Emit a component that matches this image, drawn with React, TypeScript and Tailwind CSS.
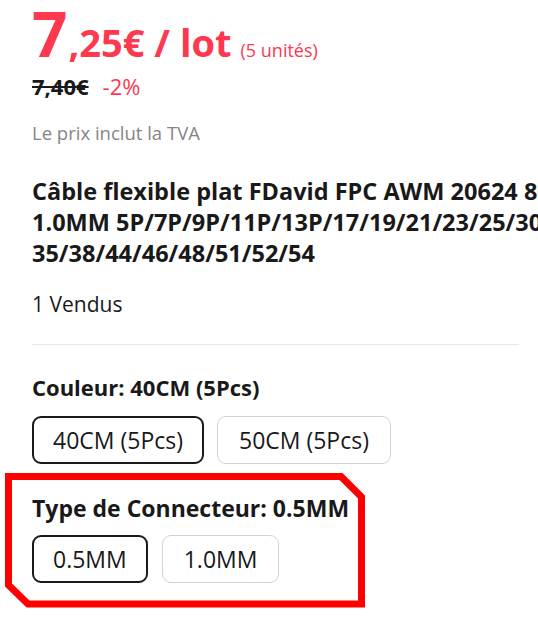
import React from 'react';

const SkuButton: React.FC<{ label: string; selected?: boolean }> = ({ label, selected }) => (
  <div
    className={`h-[48px] flex items-center justify-center rounded-[9px] text-[23px] text-[#191919] ${
      selected ? 'border-2 border-[#191919] px-[19px]' : 'border border-[#d3d3d3] px-[21px]'
    }`}
  >
    {label}
  </div>
);

export default function App() {
  return (
    <div className="relative w-[538px] h-[629px] bg-white overflow-hidden" style={{ fontFamily: '"Open Sans", sans-serif' }}>
      <div className="ml-[32px] w-[487px]">
        {/* price */}
        <div className="flex items-baseline h-[66px] text-[#fd384f] font-bold whitespace-nowrap leading-none">
          <span className="text-[62px] leading-[66px]">7</span>
          <span className="text-[38px] ml-[1px]">,25€ / lot</span>
          <span className="text-[18px] font-normal ml-[9px]">(5 unités)</span>
        </div>
        <div className="flex items-center h-[40px] text-[22px]">
          <span className="font-bold text-[#191919] line-through">7,40€</span>
          <span className="ml-[14px] text-[#fd384f]">-2%</span>
        </div>
        <div className="mt-[15px] text-[18.5px] text-[#858585] h-[24px] leading-[24px]">Le prix inclut la TVA</div>

        {/* title */}
        <div className="mt-[31px] text-[23.5px] font-bold text-[#191919] leading-[31px] whitespace-nowrap">
          <div>Câble flexible plat FDavid FPC AWM 20624 80C 60V 0.5MM</div>
          <div>1.0MM 5P/7P/9P/11P/13P/17/19/21/23/25/30/33/</div>
          <div>35/38/44/46/48/51/52/54</div>
        </div>

        <div className="mt-[23px] text-[21px] text-[#191919] leading-[24px]">1 Vendus</div>
        <div className="mt-[28px] h-px bg-[#e8e8e8]" />

        {/* sku: colour */}
        <div className="mt-[30px] text-[22px] font-bold text-[#191919] leading-[24px]">Couleur: 40CM (5Pcs)</div>
        <div className="mt-[17px] flex gap-[13px]">
          <SkuButton label="40CM (5Pcs)" selected />
          <SkuButton label="50CM (5Pcs)" />
        </div>

        {/* sku: connector */}
        <div className="mt-[32px] text-[23px] font-bold text-[#191919] leading-[24px]">Type de Connecteur: 0.5MM</div>
        <div className="mt-[15px] flex gap-[14px]">
          <SkuButton label="0.5MM" selected />
          <SkuButton label="1.0MM" />
        </div>
      </div>

      {/* red annotation frame */}
      <svg className="absolute left-0 top-0 pointer-events-none" width="538" height="629">
        <polygon
          points="8.5,476.5 341,476.5 361.5,497 361.5,604 28,604 8.5,585"
          fill="none"
          stroke="#ff0000"
          strokeWidth="7"
        />
      </svg>
    </div>
  );
}
